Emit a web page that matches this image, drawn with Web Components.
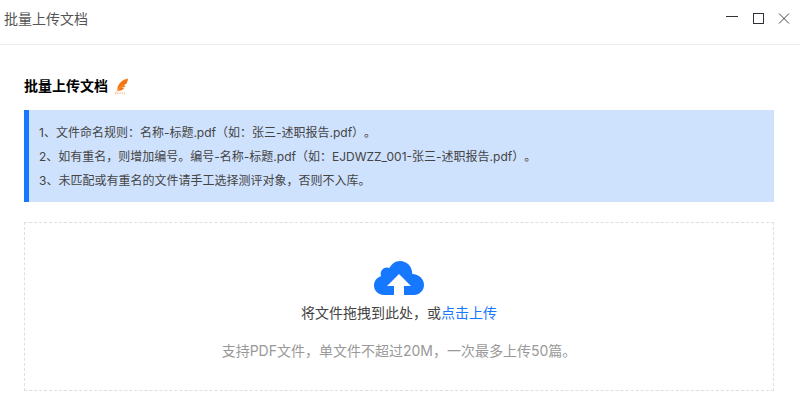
<!DOCTYPE html>
<html lang="zh">
<head>
<meta charset="utf-8">
<style>
  html, body { margin: 0; height: 100%; background: #fff; overflow: hidden; }
  body { font-family: Inter, "Noto Sans CJK SC", "Liberation Sans", sans-serif; text-spacing-trim: space-all; }
</style>
</head>
<body>
<dialog-window heading="批量上传文档">
  <section-title>批量上传文档</section-title>
  <notice-box>
    <div>1、文件命名规则：名称-标题.pdf（如：张三-述职报告.pdf）。</div>
    <div>2、如有重名，则增加编号。编号-名称-标题.pdf（如：EJDWZZ_001-张三-述职报告.pdf）。</div>
    <div>3、未匹配或有重名的文件请手工选择测评对象，否则不入库。</div>
  </notice-box>
  <upload-zone hint="支持PDF文件，单文件不超过20M，一次最多上传50篇。"></upload-zone>
</dialog-window>

<script>
// Fenetre de dialogue: barre de titre + contenu
class DialogWindow extends HTMLElement {
  constructor() {
    super();
    this.attachShadow({ mode: 'open' });
  }

  connectedCallback() {
    this.shadowRoot.innerHTML = `
      <style>
        :host { display:block; height:420px; }
        .bar { height:45px; box-sizing:border-box; border-bottom:1px solid #ececec; display:flex; align-items:center; justify-content:space-between; padding:0 8px 6px 4px; }
        .title { font-size:14px; line-height:20px; color:#555; }
        .btns { display:flex; gap:11px; align-items:center; }
        .btns svg { display:block; width:15px; height:14px; }
        .body { padding:32px 26px 0 24px; }
      </style>
      <div class="bar">
        <div class="title">${this.getAttribute('heading')}</div>
        <div class="btns">
          <svg viewBox="0 0 15 14"><path d="M1 4.500h12" stroke="#333" fill="none"/></svg>
          <svg viewBox="0 0 15 14"><rect x="2.500" y="1.500" width="10" height="10" stroke="#2f2f3a" fill="none"/></svg>
          <svg viewBox="0 0 15 14"><path d="M2 1.500l10 10M12 1.500l-10 10" stroke="#444" fill="none"/></svg>
        </div>
      </div>
      <div class="body"><slot></slot></div>
    `;
  }
}

class SectionTitle extends HTMLElement {
  constructor() {
    super();
    this.attachShadow({ mode: 'open' });
    this.shadowRoot.innerHTML = `
      <style>
        :host { display:flex; align-items:center; gap:6px; height:17px; margin-bottom:16px; font-size:14px; line-height:17px; font-weight:bold; color:#000; }
        svg { width:15px; height:16px; display:block; }
      </style>
      <slot></slot>
      <svg viewBox="0 0 15 16">
        <path d="M14 .6C9.500 1.400 5.600 4.300 4 8.200 3.300 10 3.200 11.600 3.600 12.800 6 12.900 8.600 12 10.400 10.200 8.900 10.300 8 10 7.400 9.600 9.200 9.500 10.900 9 11.800 8.200 10.800 8 10.100 7.700 9.700 7.300 11.200 7 12.400 6 13 4.600 13.500 3.400 14 2 14 .6Z" fill="#f5730e"/>
        <path d="M9 6.500C6.600 8.600 4 11.600 2.200 14.500" stroke="#f9a15c" stroke-width=".8" fill="none"/>
        <path d="M1 15.200h10" stroke="#f9a15c" stroke-dasharray="1.200 1" fill="none"/>
      </svg>
    `;
  }
}

class NoticeBox extends HTMLElement {
  constructor() {
    super();
    this.attachShadow({ mode: 'open' });
    this.shadowRoot.innerHTML = `
      <style>
        :host { display:block; box-sizing:border-box; height:92px; background:#cfe2fd; border-left:5px solid #1677ff; padding:11px 0 0 10px; font-size:12px; line-height:24px; color:#444; }
      </style>
      <slot></slot>
    `;
  }
}

class UploadZone extends HTMLElement {
  constructor() {
    super();
    this.attachShadow({ mode: 'open' });
  }

  connectedCallback() {
    this.shadowRoot.innerHTML = `
      <style>
        :host { display:flex; flex-direction:column; align-items:center; box-sizing:border-box; height:169px; margin-top:20px; border:1px dashed #dfdfdf; padding-top:38px; }
        svg { display:block; width:50px; height:34px; }
        .main { margin-top:8px; font-size:14px; line-height:20px; color:#444; }
        .main a { color:#1677ff; text-decoration:none; cursor:pointer; }
        .hint { margin-top:18px; font-size:14px; line-height:20px; color:#999; }
      </style>
      <svg viewBox="0 0 50 34">
        <path fill="#1677ff" d="M20 34H10C4.400 34 0 29.600 0 24.500 0 20 3 16.200 7 15.200 6.800 14.500 6.700 13.800 6.700 13 6.700 9.500 9.500 6.600 13 6.600 13.900 6.600 14.700 6.800 15.500 7 17.500 2.800 21.500 0 26 0 32.500 0 37.800 5 38.200 11.500 38.200 12 38.200 12.500 38.200 13 45 13 50 18 50 24 50 29.500 45.500 34 40 34H30V25H37L25 13 13 25H20Z"/>
      </svg>
      <div class="main">将文件拖拽到此处，或<a>点击上传</a></div>
      <div class="hint">${this.getAttribute('hint')}</div>
    `;
  }
}

customElements.define('dialog-window', DialogWindow);
customElements.define('section-title', SectionTitle);
customElements.define('notice-box', NoticeBox);
customElements.define('upload-zone', UploadZone);
</script>
</body>
</html>
